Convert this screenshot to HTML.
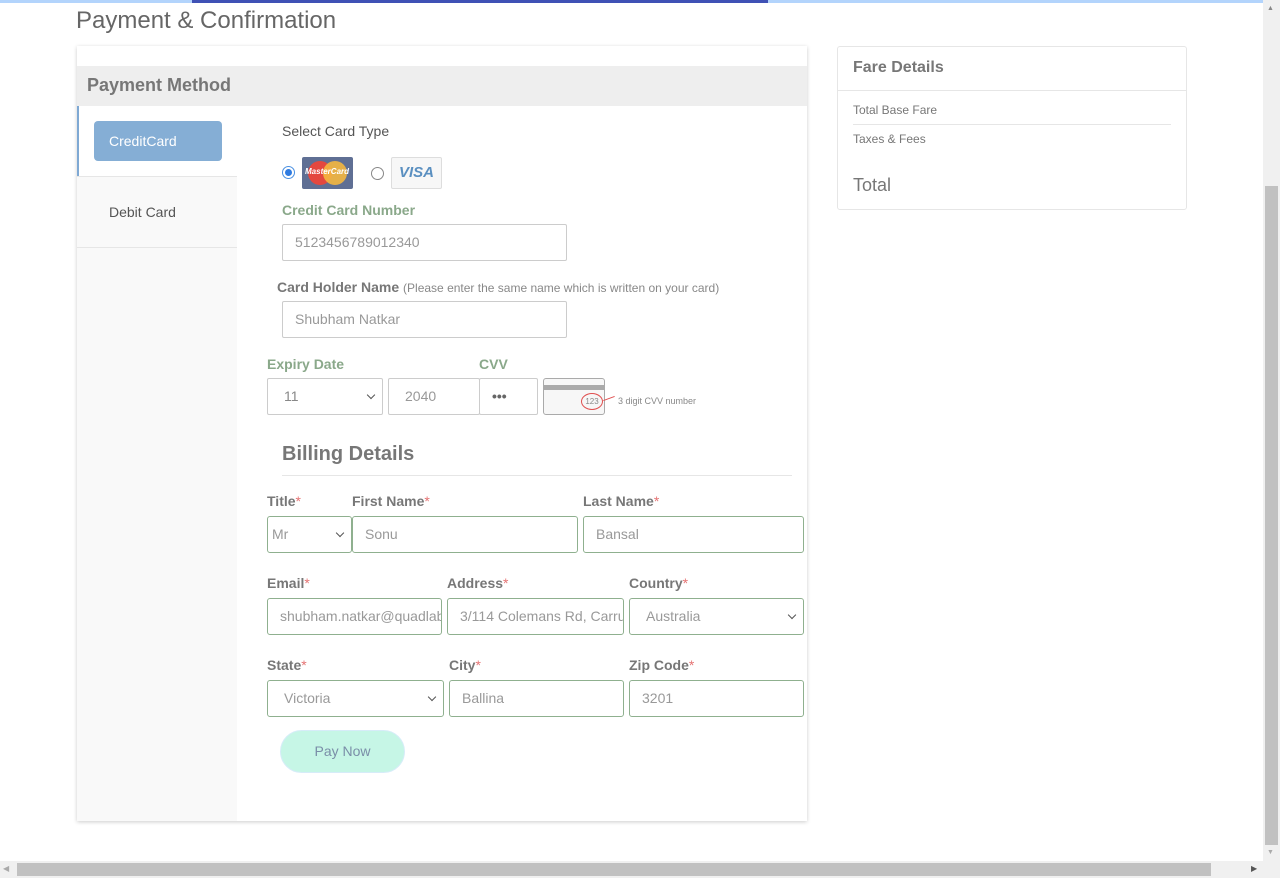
<!DOCTYPE html>
<html><head><meta charset="utf-8"><style>
*{box-sizing:border-box;margin:0;padding:0}
body{width:1280px;height:878px;overflow:hidden;background:#fff;font-family:"Liberation Sans",Arial,sans-serif;color:#555;position:relative}
.a{position:absolute}
.lbl{position:absolute;font-size:14px;font-weight:bold;color:#777}
.g{color:#8aa88a}
.st{color:#e57373;font-weight:normal}
.in{position:absolute;height:37px;border:1px solid #ccc;border-radius:2px;font-size:14px;color:#999;padding:0 12px;line-height:35px;background:#fff;white-space:nowrap;overflow:hidden}
.gr{border-color:#8fb08f;border-radius:3px}
.chev{position:absolute;right:8px;top:13px;width:6px;height:6px;border-right:1.6px solid #555;border-bottom:1.6px solid #555;transform:rotate(45deg)}
</style></head><body>
<div class="a" style="left:0;top:0;width:1263px;height:3px;background:#b3d4fc"></div>
<div class="a" style="left:192px;top:0;width:576px;height:3px;background:#3f51b5"></div>
<div class="a" style="left:76px;top:7px;font-size:24px;color:#666">Payment &amp; Confirmation</div>

<div class="a" style="left:77px;top:46px;width:730px;height:775px;background:#fff;box-shadow:0 1px 4px rgba(0,0,0,.2)"></div>
<div class="a" style="left:77px;top:66px;width:730px;height:40px;background:#eee"></div>
<div class="a" style="left:87px;top:75px;font-size:18px;font-weight:bold;color:#777">Payment Method</div>
<div class="a" style="left:77px;top:177px;width:160px;height:644px;background:#f9f9f9"></div>
<div class="a" style="left:77px;top:106px;width:2px;height:71px;background:#7fa9d4"></div>
<div class="a" style="left:77px;top:176px;width:160px;height:1px;background:#e6e6e6"></div>
<div class="a" style="left:77px;top:247px;width:160px;height:1px;background:#e6e6e6"></div>
<div class="a" style="left:94px;top:121px;width:128px;height:40px;background:#85aed5;border-radius:4px;color:#fff;font-size:14px;line-height:40px;padding-left:15px">CreditCard</div>
<div class="a" style="left:109px;top:204px;font-size:14px;color:#555">Debit Card</div>

<div class="a" style="left:282px;top:123px;font-size:14px;color:#555">Select Card Type</div>
<div class="a" style="left:282px;top:166px;width:13px;height:13px;border-radius:50%;border:1px solid #4a90e2;background:#fff"><div style="margin:2px;width:7px;height:7px;border-radius:50%;background:#2f7be0"></div></div>
<div class="a" style="left:302px;top:157px;width:51px;height:32px;background:#5f6f94;border-radius:2px">
<div class="a" style="left:6px;top:4px;width:24px;height:24px;border-radius:50%;background:#e4483f"></div>
<div class="a" style="left:21px;top:4px;width:24px;height:24px;border-radius:50%;background:#f4b73f;opacity:.9"></div>
<div class="a" style="left:3px;top:10px;font-size:8px;font-style:italic;color:#fff;font-weight:bold">MasterCard</div></div>
<div class="a" style="left:371px;top:167px;width:13px;height:13px;border-radius:50%;border:1px solid #888;background:#fff"></div>
<div class="a" style="left:391px;top:157px;width:51px;height:32px;background:#f7f7f7;border:1px solid #ddd;border-radius:2px;text-align:center;font-size:15px;font-weight:bold;font-style:italic;color:#5a8fc0;line-height:30px">VISA</div>

<div class="lbl g" style="left:282px;top:202px">Credit Card Number</div>
<div class="in" style="left:282px;top:224px;width:285px">5123456789012340</div>
<div class="lbl" style="left:277px;top:279px">Card Holder Name <span style="font-weight:normal;font-size:12px;color:#888">(Please enter the same name which is written on your card)</span></div>
<div class="in" style="left:282px;top:301px;width:285px">Shubham Natkar</div>
<div class="lbl g" style="left:267px;top:356px">Expiry Date</div>
<div class="lbl g" style="left:479px;top:356px">CVV</div>
<div class="in" style="left:267px;top:378px;width:116px;padding-left:16px;color:#888">11<span class="chev"></span></div>
<div class="in" style="left:388px;top:378px;width:92px;padding-left:16px">2040</div>
<div class="in" style="left:479px;top:378px;width:59px;color:#666;font-weight:bold">•••</div>
<div class="a" style="left:543px;top:378px;width:62px;height:37px;border:1px solid #aaa;border-radius:3px;background:#f7f7f7"><div style="margin-top:6px;height:5px;background:#aaa"></div></div>
<div class="a" style="left:581px;top:393px;width:22px;height:17px;border:1px solid #e05050;border-radius:50%;font-size:8px;color:#888;text-align:center;line-height:15px">123</div>
<div class="a" style="left:603px;top:398px;width:12px;height:1px;background:#e05050;transform:rotate(-20deg)"></div>
<div class="a" style="left:618px;top:396px;font-size:9px;color:#888">3 digit CVV number</div>

<div class="a" style="left:282px;top:443px;font-size:20px;font-weight:bold;color:#777">Billing Details</div>
<div class="a" style="left:282px;top:475px;width:510px;height:1px;background:#e6e6e6"></div>

<div class="lbl" style="left:267px;top:493px">Title<span class="st">*</span></div>
<div class="lbl" style="left:352px;top:493px">First Name<span class="st">*</span></div>
<div class="lbl" style="left:583px;top:493px">Last Name<span class="st">*</span></div>
<div class="in gr" style="left:267px;top:516px;width:85px;padding-left:4px">Mr<span class="chev"></span></div>
<div class="in gr" style="left:352px;top:516px;width:226px">Sonu</div>
<div class="in gr" style="left:583px;top:516px;width:221px">Bansal</div>

<div class="lbl" style="left:267px;top:575px">Email<span class="st">*</span></div>
<div class="lbl" style="left:447px;top:575px">Address<span class="st">*</span></div>
<div class="lbl" style="left:629px;top:575px">Country<span class="st">*</span></div>
<div class="in gr" style="left:267px;top:598px;width:175px">shubham.natkar@quadlabs.com</div>
<div class="in gr" style="left:447px;top:598px;width:177px">3/114 Colemans Rd, Carrum</div>
<div class="in gr" style="left:629px;top:598px;width:175px;padding-left:16px">Australia<span class="chev"></span></div>

<div class="lbl" style="left:267px;top:657px">State<span class="st">*</span></div>
<div class="lbl" style="left:449px;top:657px">City<span class="st">*</span></div>
<div class="lbl" style="left:629px;top:657px">Zip Code<span class="st">*</span></div>
<div class="in gr" style="left:267px;top:680px;width:177px;padding-left:16px">Victoria<span class="chev"></span></div>
<div class="in gr" style="left:449px;top:680px;width:175px">Ballina</div>
<div class="in gr" style="left:629px;top:680px;width:175px">3201</div>

<div class="a" style="left:280px;top:730px;width:125px;height:43px;border-radius:22px;background:#c6f6e6;border:1px solid #d6ecf8;color:#7a8ea8;font-size:14px;text-align:center;line-height:41px">Pay Now</div>

<div class="a" style="left:837px;top:46px;width:350px;height:164px;border:1px solid #e6e6e6;border-radius:3px"></div>
<div class="a" style="left:838px;top:90px;width:348px;height:1px;background:#e6e6e6"></div>
<div class="a" style="left:853px;top:59px;font-size:16px;font-weight:bold;color:#777">Fare Details</div>
<div class="a" style="left:853px;top:103px;font-size:12px;color:#777">Total Base Fare</div>
<div class="a" style="left:853px;top:124px;width:318px;height:1px;background:#e6e6e6"></div>
<div class="a" style="left:853px;top:132px;font-size:12px;color:#777">Taxes &amp; Fees</div>
<div class="a" style="left:853px;top:175px;font-size:18px;color:#777">Total</div>

<div class="a" style="left:1263px;top:0;width:17px;height:861px;background:#f0f0f0"></div>
<div class="a" style="left:1265px;top:186px;width:13px;height:659px;background:#c1c1c1"></div>
<div class="a" style="left:1267px;top:5px;font-size:7px;color:#888">▲</div>
<div class="a" style="left:1267px;top:849px;font-size:7px;color:#aaa">▼</div>
<div class="a" style="left:0;top:861px;width:1280px;height:17px;background:#f0f0f0"></div>
<div class="a" style="left:17px;top:863px;width:1194px;height:13px;background:#c1c1c1"></div>
<div class="a" style="left:3px;top:864px;font-size:8px;color:#aaa">◀</div>
<div class="a" style="left:1251px;top:864px;font-size:8px;color:#555">▶</div>
</body></html>
